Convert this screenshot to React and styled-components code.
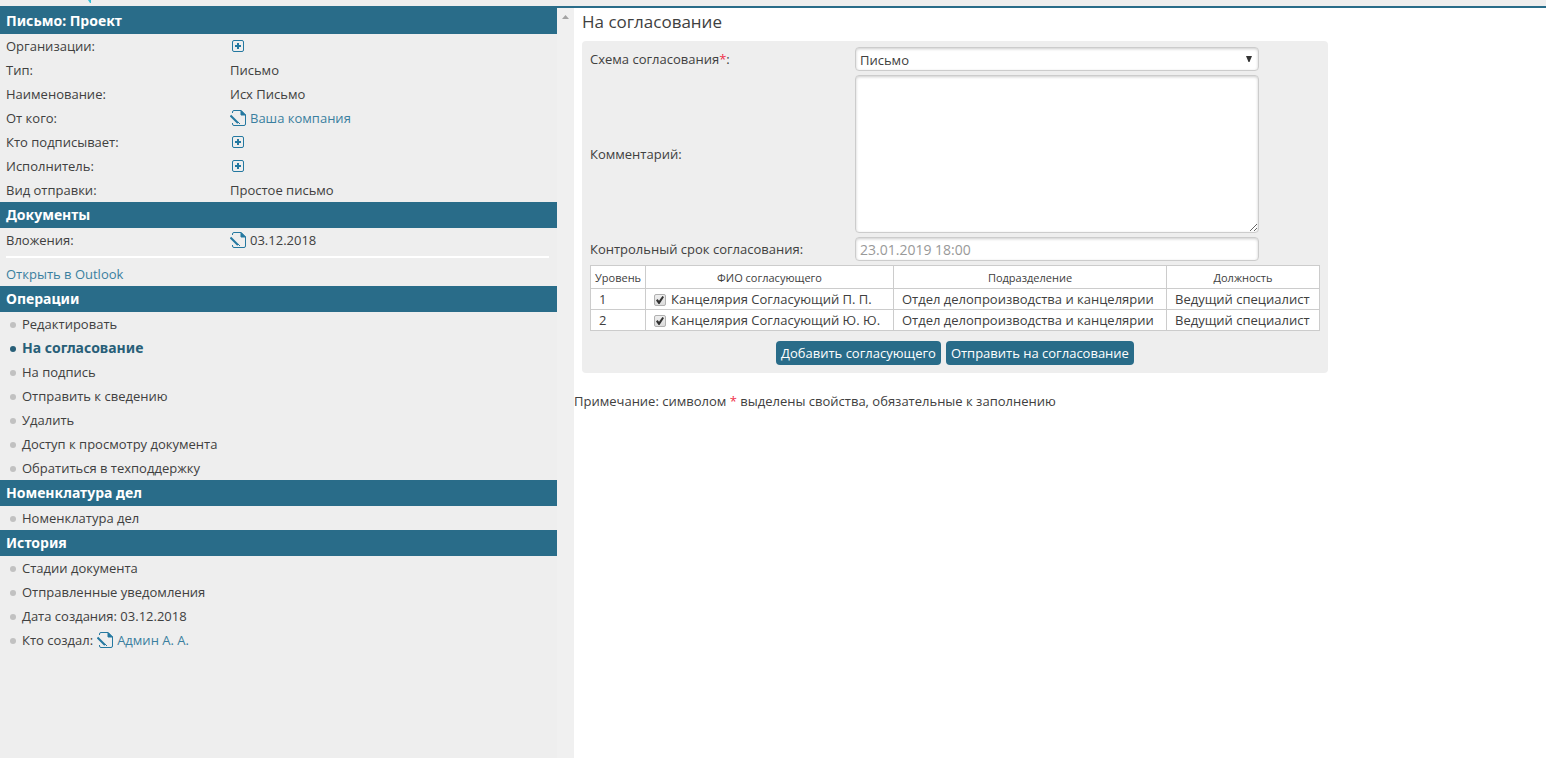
import React from "react";
import styled, { createGlobalStyle, css } from "styled-components";

const color = {
  brand: "#296c89",
  link: "#3a7f9f",
  icon: "#2478a0",
  text: "#404040",
  panel: "#eeeeee",
  line: "#cccccc",
};

const GlobalStyle = createGlobalStyle`
  * { box-sizing: border-box; }
  body {
    margin: 0;
    background: #fff;
    color: ${color.text};
    font: 13px/24px "Open Sans", "Noto Sans", sans-serif;
  }
  button, input, select, textarea { font: inherit; color: inherit; margin: 0; }
`;

const Page = styled.div`
  display: flex;
  flex-direction: column;
  min-height: 100vh;
`;

const TopStrip = styled.header`
  height: 8px;
  padding-left: 88px;
  background: ${color.panel};
  border-bottom: 2px solid ${color.brand};
  svg { display: block; }
`;

const Columns = styled.div`
  display: flex;
  flex: 1;
`;

const Sidebar = styled.aside`
  flex: 0 0 574px;
  display: flex;
  background: ${color.panel};
`;

const SidebarContent = styled.div`
  flex: 1;
`;

const ScrollTrack = styled.div`
  width: 17px;
  padding: 7px 5px;
  background: #f0f0f0;
  svg { display: block; }
`;

const SectionTitle = styled.h2`
  margin: 0;
  padding: 0 6px;
  background: ${color.brand};
  color: #fff;
  font: 700 14px/26px "Noto Sans", sans-serif;
`;

const Properties = styled.dl`
  margin: 0;
`;

const Property = styled.div`
  display: grid;
  grid-template-columns: 224px 1fr;
  padding: 0 6px;
  dt, dd { margin: 0; }
  dd { display: flex; align-items: center; gap: 4px; }
`;

const Divider = styled.hr`
  height: 2px;
  margin: 4px 8px 4px 6px;
  border: 0;
  background: #fff;
`;

const LinkRow = styled.div`
  padding: 0 6px;
`;

const IconButton = styled.button`
  display: flex;
  padding: 0 2px;
  border: 0;
  background: none;
`;

const Menu = styled.ul`
  margin: 0;
  padding: 0 10px;
  list-style: none;
`;

const MenuItem = styled.li`
  display: flex;
  align-items: center;
  gap: 6px;
  &::before {
    content: "";
    width: 6px;
    height: 6px;
    margin-top: 2px;
    border-radius: 50%;
    background: ${(p) => (p.$active ? "#285f78" : "#c1c1c1")};
  }
  ${(p) => p.$active && css`
    color: #285f78;
    font: 700 14px/24px "Noto Sans", sans-serif;
  `}
`;

const Link = styled.a`
  color: ${(p) => (p.$plain ? "inherit" : color.link)};
  text-decoration: none;
`;

const Author = styled.span`
  display: flex;
  align-items: center;
  gap: 4px;
`;

const Main = styled.main`
  flex: 1;
  min-width: 0;
`;

const PageTitle = styled.h1`
  margin: 0;
  padding: 1px 8px 6px;
  font-size: 17px;
  line-height: 26px;
  font-weight: 400;
`;

const Form = styled.form`
  max-width: 746px;
  margin: 0 8px;
  padding: 6px 8px 8px;
  border-radius: 4px;
  background: ${color.panel};
`;

const Fields = styled.div`
  display: grid;
  grid-template-columns: 265px minmax(0, 404px);
  align-items: center;
  gap: 4px 0;
`;

const Required = styled.span`
  color: #f0304a;
`;

const fieldBox = css`
  display: block;
  width: 100%;
  border: 1px solid ${color.line};
  border-radius: 4px;
  background: #fff;
  box-shadow: inset 0 1px 3px rgba(0, 0, 0, 0.2);
  font-size: 14px;
`;

const SelectWrap = styled.div`
  display: grid;
  align-items: center;
  > * { grid-area: 1 / 1; }
  svg { justify-self: end; margin-right: 7px; pointer-events: none; }
`;

const Select = styled.select`
  ${fieldBox}
  height: 24px;
  padding: 2px 4px 0;
  font-size: 13px;
  line-height: 20px;
  appearance: none;
`;

const TextInput = styled.input`
  ${fieldBox}
  height: 24px;
  padding: 2px 4px 0;
  &::placeholder { color: #999; opacity: 1; }
`;

const TextArea = styled.textarea`
  ${fieldBox}
  height: 158px;
  padding: 2px 4px;
  resize: vertical;
`;

const Table = styled.table`
  width: 100%;
  margin-top: 4px;
  border-collapse: collapse;
  table-layout: fixed;
  background: #fff;
  line-height: 20px;
  white-space: nowrap;
  th, td { border: 1px solid ${color.line}; }
  td { padding: 0 8px; }
`;

const HeadCell = styled.th`
  width: ${(p) => p.$width};
  padding: 2px 4px 0;
  font-size: 11px;
  font-weight: 400;
  text-align: center;
`;

const Approver = styled.label`
  display: flex;
  align-items: center;
  gap: 5px;
`;

const Checkbox = styled.input`
  && { margin-top: 2px; }
  appearance: none;
  width: 12px;
  height: 12px;
  display: grid;
  place-items: center;
  border: 1px solid #b0b0b0;
  border-radius: 2px;
  background: linear-gradient(#eeeeee, #dcdcdc);
  &:checked::before {
    content: "";
    width: 8px;
    height: 8px;
    background: #333;
    clip-path: polygon(0 55%, 18% 38%, 38% 58%, 80% 0, 100% 12%, 44% 100%, 32% 100%);
  }
`;

const Actions = styled.div`
  display: flex;
  justify-content: center;
  gap: 5px;
  margin-top: 10px;
`;

const Button = styled.button`
  height: 24px;
  padding: 0 5px;
  border: 0;
  border-radius: 4px;
  background: ${color.brand};
  color: #fff;
  line-height: 24px;
`;

const Note = styled.p`
  margin: 16px 0;
`;

const PlusIcon = () => (
  <svg width="12" height="12" viewBox="0 0 12 12" fill="none" stroke={color.icon}>
    <rect x=".5" y=".5" width="11" height="11" rx="1.5" />
    <path d="M3 6h6M6 3v6" strokeWidth="2" />
  </svg>
);

const DocIcon = () => (
  <svg width="16" height="16" viewBox="0 0 16 16" fill="none" stroke={color.icon}>
    <path d="M2.5 3V2Q2.5.5 4 .5H11L15.5 5V14Q15.5 15.5 14 15.5H4Q2.5 15.5 2.5 14V13" />
    <path d="M11 .5V5H15.5Z" fill={color.icon} />
    <path d="M.5 5.500L8 13" strokeWidth="2" />
    <path d="M8 12l2 2" />
  </svg>
);

const Add = ({ label }) => (
  <IconButton type="button" aria-label={label}><PlusIcon /></IconButton>
);

const operations = [
  "Редактировать",
  "На согласование",
  "На подпись",
  "Отправить к сведению",
  "Удалить",
  "Доступ к просмотру документа",
  "Обратиться в техподдержку",
];

const tableColumns = [
  { title: "Уровень", width: "55px" },
  { title: "ФИО согласующего", width: "248px" },
  { title: "Подразделение", width: "273px" },
  { title: "Должность", width: "auto" },
];

const approvers = [
  { level: 1, name: "Канцелярия Согласующий П. П." },
  { level: 2, name: "Канцелярия Согласующий Ю. Ю." },
];

const Row = ({ label, children }) => (
  <Property>
    <dt>{label}:</dt>
    <dd>{children}</dd>
  </Property>
);

const Item = ({ active, children }) => (
  <MenuItem $active={active}><Link $plain href="#">{children}</Link></MenuItem>
);

export default function App() {
  return (
    <Page>
      <GlobalStyle />
      <TopStrip>
        <svg width="4" height="3" viewBox="0 0 4 3"><path d="M0 0H3V3H2Z" fill="#35bfd8" /></svg>
      </TopStrip>
      <Columns>
        <Sidebar>
          <SidebarContent>
            <SectionTitle>Письмо: Проект</SectionTitle>
            <Properties>
              <Row label="Организации"><Add label="Добавить организацию" /></Row>
              <Row label="Тип">Письмо</Row>
              <Row label="Наименование">Исх Письмо</Row>
              <Row label="От кого"><DocIcon /><Link href="#">Ваша компания</Link></Row>
              <Row label="Кто подписывает"><Add label="Добавить подписывающего" /></Row>
              <Row label="Исполнитель"><Add label="Добавить исполнителя" /></Row>
              <Row label="Вид отправки">Простое письмо</Row>
            </Properties>
            <SectionTitle>Документы</SectionTitle>
            <Properties>
              <Row label="Вложения"><DocIcon />03.12.2018</Row>
            </Properties>
            <Divider />
            <LinkRow><Link href="#">Открыть в Outlook</Link></LinkRow>
            <SectionTitle>Операции</SectionTitle>
            <Menu>
              {operations.map((name) => (
                <Item key={name} active={name === "На согласование"}>{name}</Item>
              ))}
            </Menu>
            <SectionTitle>Номенклатура дел</SectionTitle>
            <Menu><Item>Номенклатура дел</Item></Menu>
            <SectionTitle>История</SectionTitle>
            <Menu>
              <Item>Стадии документа</Item>
              <Item>Отправленные уведомления</Item>
              <MenuItem>Дата создания: 03.12.2018</MenuItem>
              <MenuItem>
                <Author>Кто создал: <DocIcon /><Link href="#">Админ А. А.</Link></Author>
              </MenuItem>
            </Menu>
          </SidebarContent>
          <ScrollTrack>
            <svg width="7" height="4" viewBox="0 0 7 4"><path d="M0 4L3.500 0L7 4Z" fill="#a3a3a3" /></svg>
          </ScrollTrack>
        </Sidebar>
        <Main>
          <PageTitle>На согласование</PageTitle>
          <Form onSubmit={(e) => e.preventDefault()}>
            <Fields>
              <label htmlFor="scheme">Схема согласования<Required>*</Required>:</label>
              <SelectWrap>
                <Select id="scheme"><option>Письмо</option></Select>
                <svg width="6" height="6" viewBox="0 0 6 6"><path d="M0 0H6L3.500 6H2.500Z" fill="#333" /></svg>
              </SelectWrap>
              <label htmlFor="comment">Комментарий:</label>
              <TextArea id="comment" />
              <label htmlFor="deadline">Контрольный срок согласования:</label>
              <TextInput id="deadline" placeholder="23.01.2019 18:00" />
            </Fields>
            <Table>
              <thead>
                <tr>
                  {tableColumns.map((c) => (
                    <HeadCell key={c.title} $width={c.width}>{c.title}</HeadCell>
                  ))}
                </tr>
              </thead>
              <tbody>
                {approvers.map((a) => (
                  <tr key={a.level}>
                    <td>{a.level}</td>
                    <td><Approver><Checkbox type="checkbox" defaultChecked />{a.name}</Approver></td>
                    <td>Отдел делопроизводства и канцелярии</td>
                    <td>Ведущий специалист</td>
                  </tr>
                ))}
              </tbody>
            </Table>
            <Actions>
              <Button type="button">Добавить согласующего</Button>
              <Button type="submit">Отправить на согласование</Button>
            </Actions>
          </Form>
          <Note>Примечание: символом <Required>*</Required> выделены свойства, обязательные к заполнению</Note>
        </Main>
      </Columns>
    </Page>
  );
}
